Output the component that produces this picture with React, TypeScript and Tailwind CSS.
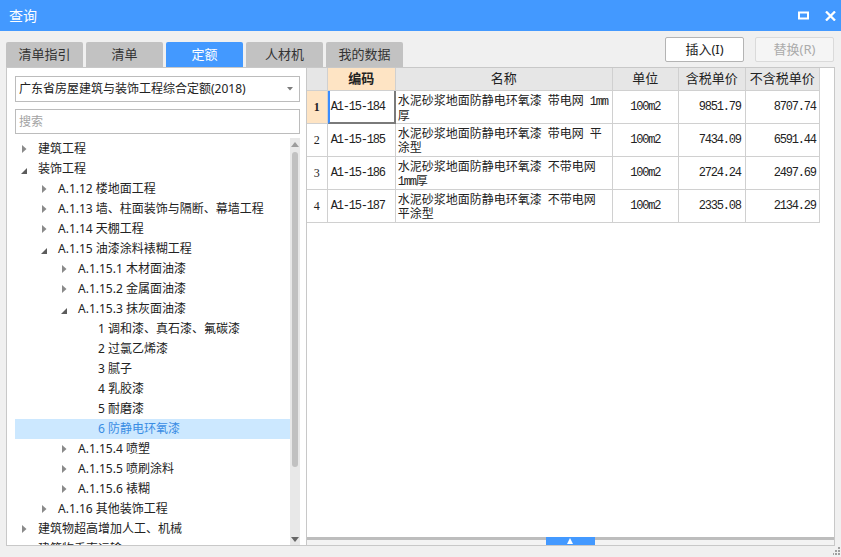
type NodeState = "closed" | "open" | "leaf";

interface TreeNode {
  level: number;
  label: string;
  state: NodeState;
  selected?: boolean;
}

const tree: TreeNode[] = [
  { level: 0, label: "建筑工程", state: "closed" },
  { level: 0, label: "装饰工程", state: "open" },
  { level: 1, label: "A.1.12 楼地面工程", state: "closed" },
  { level: 1, label: "A.1.13 墙、柱面装饰与隔断、幕墙工程", state: "closed" },
  { level: 1, label: "A.1.14 天棚工程", state: "closed" },
  { level: 1, label: "A.1.15 油漆涂料裱糊工程", state: "open" },
  { level: 2, label: "A.1.15.1 木材面油漆", state: "closed" },
  { level: 2, label: "A.1.15.2 金属面油漆", state: "closed" },
  { level: 2, label: "A.1.15.3 抹灰面油漆", state: "open" },
  { level: 3, label: "1 调和漆、真石漆、氟碳漆", state: "leaf" },
  { level: 3, label: "2 过氯乙烯漆", state: "leaf" },
  { level: 3, label: "3 腻子", state: "leaf" },
  { level: 3, label: "4 乳胶漆", state: "leaf" },
  { level: 3, label: "5 耐磨漆", state: "leaf" },
  { level: 3, label: "6 防静电环氧漆", state: "leaf", selected: true },
  { level: 2, label: "A.1.15.4 喷塑", state: "closed" },
  { level: 2, label: "A.1.15.5 喷刷涂料", state: "closed" },
  { level: 2, label: "A.1.15.6 裱糊", state: "closed" },
  { level: 1, label: "A.1.16 其他装饰工程", state: "closed" },
  { level: 0, label: "建筑物超高增加人工、机械", state: "closed" },
  { level: 0, label: "建筑物垂直运输", state: "closed" },
];

const indent = ["pl-0", "pl-5", "pl-10", "pl-15"];

interface Row {
  n: number;
  code: string;
  line1: string;
  line1mm?: boolean;
  line2: string;
  line2mm?: boolean;
  unit: string;
  tax: string;
  notax: string;
}

const rows: Row[] = [
  { n: 1, code: "A1-15-184", line1: "水泥砂浆地面防静电环氧漆\u2002带电网\u2002", line1mm: true, line2: "厚", unit: "100m2", tax: "9851.79", notax: "8707.74" },
  { n: 2, code: "A1-15-185", line1: "水泥砂浆地面防静电环氧漆\u2002带电网\u2002平", line2: "涂型", unit: "100m2", tax: "7434.09", notax: "6591.44" },
  { n: 3, code: "A1-15-186", line1: "水泥砂浆地面防静电环氧漆\u2002不带电网", line2: "厚", line2mm: true, unit: "100m2", tax: "2724.24", notax: "2497.69" },
  { n: 4, code: "A1-15-187", line1: "水泥砂浆地面防静电环氧漆\u2002不带电网", line2: "平涂型", unit: "100m2", tax: "2335.08", notax: "2134.29" },
];

const tabs = ["清单指引", "清单", "定额", "人材机", "我的数据"];

const mono = "font-['Liberation_Mono','DejaVu_Sans_Mono',monospace] text-[12px] tracking-[-1.2px]";

function Arrow({ state }: { state: NodeState }) {
  if (state === "closed")
    return (
      <svg width="5" height="8" viewBox="0 0 5 8" className="ml-[7px]">
        <path d="M0 0L4.5 4L0 8Z" fill="#8a8a8a" />
      </svg>
    );
  if (state === "open")
    return (
      <svg width="6" height="6" viewBox="0 0 6 6" className="ml-[6px] mt-[4px]">
        <path d="M6 0V6H0Z" fill="#5c5c5c" />
      </svg>
    );
  return null;
}

function Mm() {
  return <span className={mono}>1mm</span>;
}

export default function App() {
  return (
    <div className="w-[841px] h-[557px] bg-[#f0f0f0] flex flex-col overflow-hidden font-['Noto_Sans','Noto_Sans_CJK_SC',sans-serif] text-[#222]">
      <div className="h-[31px] bg-[#4399ff] flex items-center pl-[9px] pr-[5px] shrink-0">
        <span className="text-white text-[14px]">查询</span>
        <div className="ml-auto flex items-center gap-[16px]">
          <svg width="11" height="9" viewBox="0 0 11 9">
            <rect x="1" y="1.5" width="9" height="6" fill="none" stroke="white" strokeWidth="2" />
          </svg>
          <svg width="11" height="10" viewBox="0 0 11 10">
            <path d="M1 0.5L10 9.5M10 0.5L1 9.5" stroke="white" strokeWidth="2.3" />
          </svg>
        </div>
      </div>

      <div className="h-[36px] flex items-end px-[6px] shrink-0">
        <div className="flex gap-[3px]">
          {tabs.map((t, i) => (
            <div
              key={t}
              className={
                i === 2
                  ? "w-[77px] h-[25px] rounded-t-[2px] bg-[#4399ff] text-white flex items-center justify-center text-[13px]"
                  : "w-[77px] h-[25px] rounded-t-[2px] bg-[#c2c2c2] text-[#333] flex items-center justify-center text-[13px]"
              }
            >
              {t}
            </div>
          ))}
        </div>
        <div className="ml-auto flex gap-[11px] mb-[5px] mr-[1px]">
          <div className="w-[79px] h-[25px] bg-white border border-[#b4b4b4] rounded-[2px] flex items-center justify-center text-[13px] text-[#222]">
            插入(I)
          </div>
          <div className="w-[79px] h-[25px] bg-[#f5f5f5] border border-[#dadada] rounded-[2px] flex items-center justify-center text-[13px] text-[#ababab]">
            替换(R)
          </div>
        </div>
      </div>

      <div className="mx-[6px] h-[479px] flex shrink-0">
        <div className="w-[301px] border border-[#c8c8c8] bg-white flex flex-col pt-[8px] pl-[8px] pr-[5px]">
          <div className="h-[26px] w-[285px] border border-[#bcbcbc] flex items-center pl-[3px] pr-[6px] text-[12px]">
            <span>广东省房屋建筑与装饰工程综合定额(2018)</span>
            <svg width="6" height="4" viewBox="0 0 6 4" className="ml-auto">
              <path d="M0 0H6L3 3.5Z" fill="#7c7c7c" />
            </svg>
          </div>
          <div className="mt-[7px] h-[25px] w-[285px] border border-[#bcbcbc] flex items-center pl-[3px] text-[12px] text-[#a3a3a3]">
            搜索
          </div>
          <div className="mt-[4px] flex-1 flex min-h-0">
            <div className="w-[275px] overflow-hidden text-[12px] pt-[1px]">
              {tree.map((n) => (
                <div
                  key={n.label}
                  className={`h-5 flex items-center ${indent[n.level]} ${n.selected ? "bg-[#cce8ff] text-[#3a8de4]" : ""}`}
                >
                  <div className="w-[23px] h-5 flex items-center shrink-0">
                    <Arrow state={n.state} />
                  </div>
                  <span className="whitespace-nowrap">{n.label}</span>
                </div>
              ))}
            </div>
            <div className="w-[10px] bg-[#e8e8e8] flex flex-col items-center">
              <svg width="8" height="5" viewBox="0 0 8 5" className="mt-[4px]">
                <path d="M0 5L4 0L8 5Z" fill="#9c9c9c" />
              </svg>
              <div className="mt-[5px] w-[6px] h-[315px] rounded-[3px] bg-[#c1c1c1]" />
              <svg width="8" height="5" viewBox="0 0 8 5" className="mt-auto mb-[3px]">
                <path d="M0 0H8L4 5Z" fill="#666" />
              </svg>
            </div>
          </div>
        </div>

        <div className="w-[529px] border border-l-0 border-[#c8c8c8] bg-white flex flex-col">
          <div className="flex-1">
            <div className="grid grid-cols-[21px_68px_217px_66px_67px_74px] w-[513px] text-[13px]">
              <div className="h-[23px] bg-[#e6e6e6] border-r border-b border-[#d0d0d0]" />
              <div className="h-[23px] bg-[#fee4c4] border-r border-b border-[#d0d0d0] flex items-center justify-center font-bold">编码</div>
              <div className="h-[23px] bg-[#e6e6e6] border-r border-b border-[#d0d0d0] flex items-center justify-center">名称</div>
              <div className="h-[23px] bg-[#e6e6e6] border-r border-b border-[#d0d0d0] flex items-center justify-center">单位</div>
              <div className="h-[23px] bg-[#e6e6e6] border-r border-b border-[#d0d0d0] flex items-center justify-center">含税单价</div>
              <div className="h-[23px] bg-[#e6e6e6] border-r border-b border-[#d0d0d0] flex items-center justify-center">不含税单价</div>
              {rows.map((r) => (
                <div key={r.n} className="contents">
                  <div
                    className={
                      r.n === 1
                        ? "h-[33px] bg-[#fee4c4] border-r border-b border-[#d0d0d0] flex items-center justify-center font-['Liberation_Serif',serif] text-[12px] font-bold"
                        : "h-[33px] border-r border-b border-[#d0d0d0] flex items-center justify-center font-['Liberation_Serif',serif] text-[12px]"
                    }
                  >
                    {r.n}
                  </div>
                  <div
                    className={
                      r.n === 1
                        ? `h-[33px] border-l-2 border-l-[#3a8cff] border-r-2 border-b-2 border-r-[#7a7a7a] border-b-[#7a7a7a] flex items-center pl-[1px] ${mono}`
                        : `h-[33px] border-r border-b border-[#d0d0d0] flex items-center pl-[3px] ${mono}`
                    }
                  >
                    {r.code}
                  </div>
                  <div className="h-[33px] border-r border-b border-[#d0d0d0] pl-[2px] pt-[3px] text-[12px] leading-[14px] whitespace-nowrap overflow-hidden">
                    <div>
                      {r.line1}
                      {r.line1mm && <Mm />}
                    </div>
                    <div>
                      {r.line2mm && <Mm />}
                      {r.line2}
                    </div>
                  </div>
                  <div className={`h-[33px] border-r border-b border-[#d0d0d0] flex items-center justify-center ${mono}`}>
                    {r.unit}
                  </div>
                  <div className={`h-[33px] border-r border-b border-[#d0d0d0] flex items-center justify-end pr-[4px] ${mono}`}>
                    {r.tax}
                  </div>
                  <div className={`h-[33px] border-r border-b border-[#d0d0d0] flex items-center justify-end pr-[3px] ${mono}`}>
                    {r.notax}
                  </div>
                </div>
              ))}
            </div>
          </div>
          <div className="relative h-[8px] shrink-0">
            <div className="h-[3px] bg-[#bdbdbd]" />
            <div className="h-[5px] bg-[#f3f3f3]" />
            <div className="absolute top-0 left-[239px] w-[49px] h-[8px] bg-[#4399ff] flex items-center justify-center">
              <svg width="6" height="6" viewBox="0 0 6 6">
                <path d="M3 0L6 6H0Z" fill="white" />
              </svg>
            </div>
          </div>
        </div>
      </div>

      <div className="flex-1 flex justify-end items-end">
        <svg width="8" height="9" viewBox="0 0 8 9" className="mb-[1px]">
          <rect x="5" y="0" width="2" height="2" fill="#a0a0a0" />
          <rect x="2" y="3" width="2" height="2" fill="#a0a0a0" />
          <rect x="5" y="3" width="2" height="2" fill="#a0a0a0" />
          <rect x="-1" y="6" width="2" height="2" fill="#a0a0a0" />
          <rect x="2" y="6" width="2" height="2" fill="#a0a0a0" />
          <rect x="5" y="6" width="2" height="2" fill="#a0a0a0" />
        </svg>
      </div>
    </div>
  );
}
